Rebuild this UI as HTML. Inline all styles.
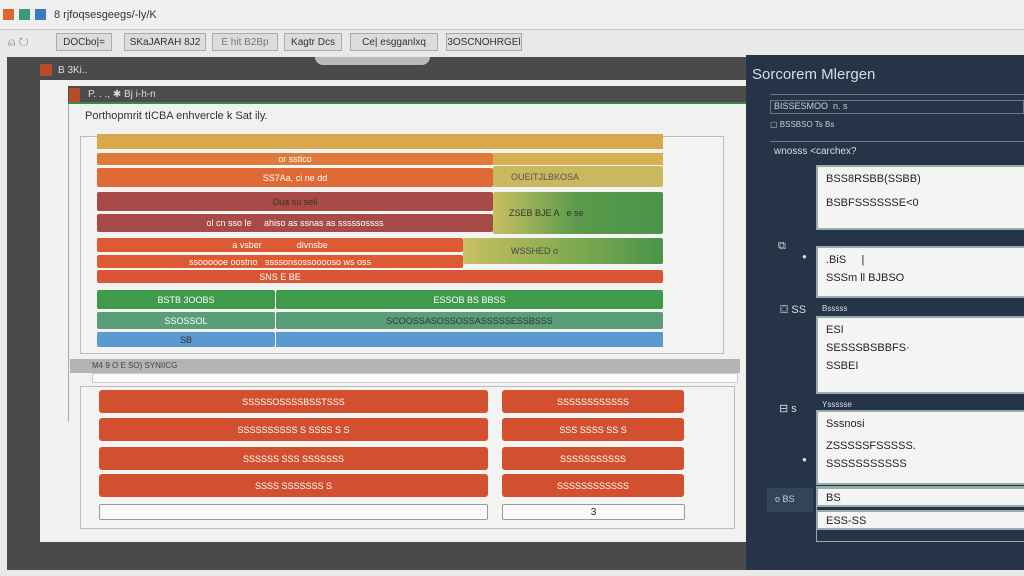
<!DOCTYPE html><html><head><style>
*{margin:0;padding:0;box-sizing:border-box}
body{width:1024px;height:576px;position:relative;overflow:hidden;background:#e9e9e7;font-family:"Liberation Sans",sans-serif;font-size:9px;color:#fff}
div{position:absolute}
.b{display:flex;align-items:center;justify-content:center;white-space:nowrap;border-radius:2px}
.tb{top:33px;height:18px;border:1px solid #aaa;background:#dcdcda;color:#333;font-size:10px;display:flex;align-items:center;justify-content:center;white-space:nowrap;overflow:hidden}
.rb{background:#d2502f;border-radius:3px;height:23px;display:flex;align-items:center;justify-content:center;font-size:9px}
.box{background:#f4f4f2;border:2px solid #9aa;left:816px;width:210px;color:#222;font-size:11px;padding-left:8px}
.box p{margin-top:6px}
</style></head><body>
<div style="left:0;top:0;width:1024px;height:30px;background:#efefed;border-bottom:1px solid #ccc"></div>
<div style="left:3px;top:9px;width:11px;height:11px;background:#d8682e"></div>
<div style="left:19px;top:9px;width:11px;height:11px;background:#3a9a7a"></div>
<div style="left:35px;top:9px;width:11px;height:11px;background:#3a7ac0"></div>
<div style="left:54px;top:9px;color:#333;font-size:11px">8 rjfoqsesgeegs/-ly/K</div>
<div style="left:8px;top:35px;color:#888;font-size:12px">⍝ ↻</div>
<div class="tb" style="left:56px;width:56px">DOCbo|=</div>
<div class="tb" style="left:124px;width:82px">SKaJARAH 8J2</div>
<div class="tb" style="left:212px;width:66px;color:#777">E hit B2Bp</div>
<div class="tb" style="left:284px;width:58px">Kagtr Dcs</div>
<div class="tb" style="left:350px;width:88px">Ce| esgganlxq</div>
<div class="tb" style="left:446px;width:76px">3OSCNOHRGEl</div>
<div style="left:7px;top:57px;width:740px;height:513px;background:#4a4a4a"></div>
<div style="left:315px;top:57px;width:115px;height:8px;background:#bbb;border-radius:0 0 10px 10px"></div>
<div style="left:40px;top:64px;width:12px;height:12px;background:#b84a2e"></div>
<div style="left:58px;top:65px;font-size:10px;color:#ddd">B 3Ki..</div>
<div style="left:40px;top:80px;width:706px;height:462px;background:#f1f1ef"></div>
<div style="left:68px;top:104px;width:1px;height:318px;background:#aaa"></div>
<div style="left:68px;top:86px;width:678px;height:18px;background:#4c4c4a;border-bottom:2px solid #3a8a4a"></div>
<div style="left:69px;top:88px;width:11px;height:14px;background:#b84a2e"></div>
<div style="left:88px;top:89px;font-size:10px;color:#ddd">P. . ., ✱ Bj i-h-n</div>
<div style="left:85px;top:110px;color:#333;font-size:11px">Porthopmrit tICBA enhvercle k Sat ily.</div>
<div style="left:80px;top:136px;width:644px;height:218px;border:1px solid #bbb;background:#f3f3f1"></div>
<div style="left:80px;top:386px;width:655px;height:143px;border:1px solid #bbb;background:#f3f3f1"></div>
<div style="left:97px;top:134px;width:566px;height:15px;background:#d9a84a"></div>
<div class="b" style="left:97px;top:153px;width:396px;height:12px;background:#e07a3a">or sstico</div>
<div style="left:493px;top:153px;width:170px;height:12px;background:#d8b050"></div>
<div class="b" style="left:97px;top:168px;width:396px;height:19px;background:#e06a35">SS7Aa, ci ne dd</div>
<div class="b" style="left:493px;top:166px;width:170px;height:21px;background:#c9b860;color:#555;justify-content:flex-start;padding-left:18px">OUEITJLBKOSA</div>
<div class="b" style="left:97px;top:192px;width:396px;height:19px;background:#a84a48;color:#333">Dua su seli</div>
<div class="b" style="left:97px;top:214px;width:396px;height:18px;background:#a84a48">ol cn sso le &nbsp;&nbsp;&nbsp; ahiso as ssnas as sssssossss</div>
<div class="b" style="left:493px;top:192px;width:170px;height:42px;background:linear-gradient(90deg,#c8c060,#5a9a4a 50%,#4a944a);color:#333;justify-content:flex-start;padding-left:16px">ZSEB BJE A &nbsp; e se</div>
<div class="b" style="left:97px;top:238px;width:366px;height:14px;background:#dd5a35">a vsber &nbsp;&nbsp;&nbsp;&nbsp;&nbsp;&nbsp;&nbsp;&nbsp;&nbsp;&nbsp;&nbsp;&nbsp; divnsbe</div>
<div class="b" style="left:97px;top:255px;width:366px;height:13px;background:#dd5a35">ssoooooe oostno &nbsp; ssssonsossooooso ws oss</div>
<div class="b" style="left:463px;top:238px;width:200px;height:26px;background:linear-gradient(90deg,#c8c060,#7aa850 60%,#4a944a);color:#444;justify-content:flex-start;padding-left:48px">WSSHED o</div>
<div class="b" style="left:97px;top:270px;width:566px;height:13px;background:#d95535;padding-right:200px">SNS E BE</div>
<div class="b" style="left:97px;top:290px;width:178px;height:19px;background:#3f9a4a">BSTB 3OOBS</div>
<div class="b" style="left:276px;top:290px;width:387px;height:19px;background:#3f9a4a">ESSOB BS BBSS</div>
<div class="b" style="left:97px;top:312px;width:178px;height:17px;background:#5a9e78">SSOSSOL</div>
<div class="b" style="left:276px;top:312px;width:387px;height:17px;background:#5a9e78;color:#333">SCOOSSASOSSOSSASSSSSESSBSSS</div>
<div class="b" style="left:97px;top:332px;width:178px;height:15px;background:#5a9ad0;color:#333">SB</div>
<div style="left:276px;top:332px;width:387px;height:15px;background:#5a9ad0"></div>
<div style="left:70px;top:359px;width:670px;height:14px;background:#b4b4b2;color:#444;font-size:8px;padding:2px 0 0 22px">M4 9 O E SO) SYNIICG</div>
<div style="left:92px;top:373px;width:646px;height:10px;background:#fafafa;border:1px solid #ccc"></div>
<div class="rb" style="left:99px;top:390px;width:389px">SSSSSOSSSSBSSTSSS</div>
<div class="rb" style="left:99px;top:418px;width:389px">SSSSSSSSSS S SSSS S S</div>
<div class="rb" style="left:99px;top:447px;width:389px">SSSSSS SSS SSSSSSS</div>
<div class="rb" style="left:99px;top:474px;width:389px">SSSS SSSSSSS S</div>
<div class="rb" style="left:502px;top:390px;width:182px">SSSSSSSSSSSS</div>
<div class="rb" style="left:502px;top:418px;width:182px">SSS SSSS SS S</div>
<div class="rb" style="left:502px;top:447px;width:182px">SSSSSSSSSSS</div>
<div class="rb" style="left:502px;top:474px;width:182px">SSSSSSSSSSSS</div>
<div style="left:99px;top:504px;width:389px;height:16px;background:#fafafa;border:1px solid #999;border-radius:2px"></div>
<div class="b" style="left:502px;top:504px;width:183px;height:16px;background:#fafafa;border:1px solid #999;color:#222;font-size:10px">3</div>
<div style="left:746px;top:55px;width:278px;height:515px;background:#253447"></div>
<div style="left:752px;top:66px;font-size:15px;color:#d8dde2">Sorcorem Mlergen</div>
<div style="left:770px;top:94px;width:254px;height:1px;background:#6a7a8a"></div>
<div style="left:770px;top:100px;width:254px;height:14px;border:1px solid #6a7a8a;color:#ccd;font-size:9px;padding-left:3px">BISSESMOO &nbsp;n. s</div>
<div style="left:770px;top:120px;width:140px;height:12px;color:#ccd;font-size:8px">▢ BSSBSO Ts Bs</div>
<div style="left:770px;top:141px;width:254px;height:1px;background:#6a7a8a"></div>
<div style="left:774px;top:146px;color:#dde;font-size:10px">wnosss &lt;carchex?</div>
<div class="box" style="top:165px;height:65px"><p>BSS8RSBB(SSBB)</p><p style="margin-top:12px">BSBFSSSSSSE&lt;0</p></div>
<div style="left:778px;top:240px;color:#dde;font-size:11px">⧉</div>
<div style="left:802px;top:252px;color:#dde;font-size:8px">●</div>
<div class="box" style="top:246px;height:52px"><p>.BiS &nbsp;&nbsp;&nbsp; |</p><p>SSSm ll BJBSO</p></div>
<div style="left:780px;top:304px;color:#dde;font-size:11px">⛋ SS</div>
<div style="left:822px;top:304px;color:#dde;font-size:8px">Bsssss</div>
<div class="box" style="top:316px;height:78px"><p>ESI</p><p>SESSSBSBBFS·</p><p>SSBEI</p></div>
<div style="left:779px;top:402px;color:#dde;font-size:11px">⊟ s</div>
<div style="left:822px;top:400px;color:#dde;font-size:8px">Yssssse</div>
<div class="box" style="top:410px;height:75px"><p>Sssnosi</p><p style="margin-top:10px">ZSSSSSFSSSSS.</p><p>SSSSSSSSSSS</p></div>
<div style="left:802px;top:455px;color:#dde;font-size:8px">●</div>
<div style="left:767px;top:488px;width:46px;height:24px;background:#34445a;color:#ccd;font-size:9px;padding:6px 0 0 8px">o BS</div>
<div style="left:816px;top:486px;width:210px;height:56px;border:1px solid #9aa"></div>
<div class="box" style="top:487px;height:20px;padding-top:3px">BS</div>
<div class="box" style="top:510px;height:20px;padding-top:3px">ESS-SS</div>
</body></html>
